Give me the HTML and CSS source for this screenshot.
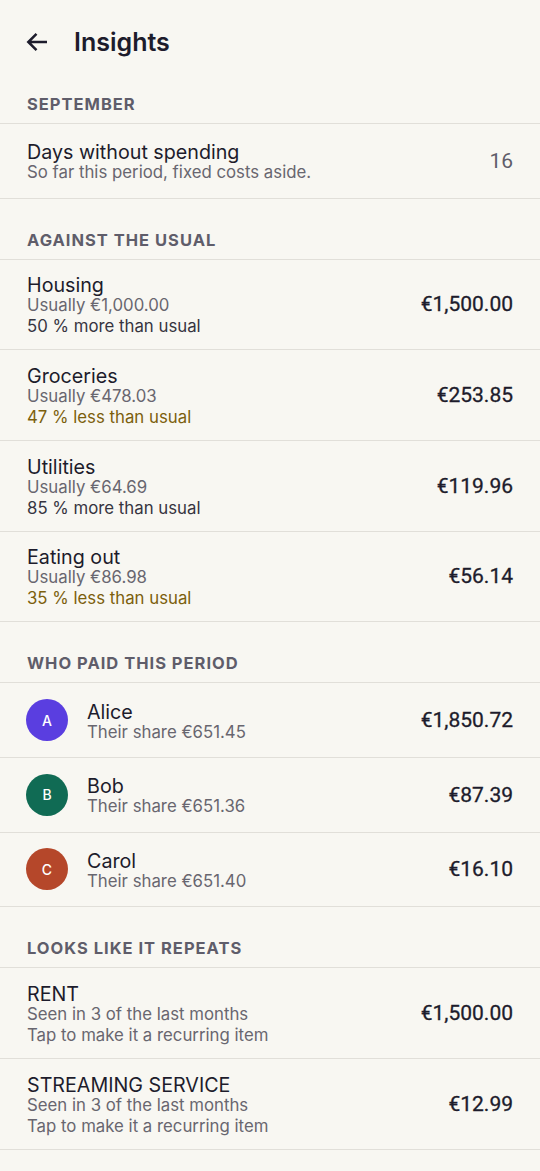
FILE: index.html
```html
<!doctype html>
<html lang="en">
  <head>
    <meta charset="utf-8">
    <meta name="viewport" content="width=device-width,initial-scale=1">
    <title>Insights</title>
    <link rel="stylesheet" href="styles.css">
  </head>

  <body>
    <header class="appbar">
      <svg class="back" viewBox="0 0 24 24" width="24" height="24">
        <path d="M23 12H4.5M12.5 3.8L4.3 12l8.2 8.2"/>
      </svg>
      <h1>Insights</h1>
    </header>

    <main>
      <section>
        <h2 class="first">September</h2>
        <ul>
          <li>
            <div class="text">
              <span class="title">Days without spending</span>
              <span class="sub">So far this period, fixed costs aside.</span>
            </div>
            <span class="count">16</span>
          </li>
        </ul>
      </section>

      <section>
        <h2>Against the usual</h2>
        <ul>
          <li>
            <div class="text">
              <span class="title">Housing</span>
              <span class="sub">Usually €1,000.00</span>
              <span class="note">50 % more than usual</span>
            </div>
            <span class="amount">€1,500.00</span>
          </li>
          <li>
            <div class="text">
              <span class="title">Groceries</span>
              <span class="sub">Usually €478.03</span>
              <span class="note less">47 % less than usual</span>
            </div>
            <span class="amount">€253.85</span>
          </li>
          <li>
            <div class="text">
              <span class="title">Utilities</span>
              <span class="sub">Usually €64.69</span>
              <span class="note">85 % more than usual</span>
            </div>
            <span class="amount">€119.96</span>
          </li>
          <li>
            <div class="text">
              <span class="title">Eating out</span>
              <span class="sub">Usually €86.98</span>
              <span class="note less">35 % less than usual</span>
            </div>
            <span class="amount">€56.14</span>
          </li>
        </ul>
      </section>

      <section>
        <h2>Who paid this period</h2>
        <ul>
          <li>
            <span class="avatar alice">A</span>
            <div class="text">
              <span class="title">Alice</span>
              <span class="sub">Their share €651.45</span>
            </div>
            <span class="amount">€1,850.72</span>
          </li>
          <li>
            <span class="avatar bob">B</span>
            <div class="text">
              <span class="title">Bob</span>
              <span class="sub">Their share €651.36</span>
            </div>
            <span class="amount">€87.39</span>
          </li>
          <li>
            <span class="avatar carol">C</span>
            <div class="text">
              <span class="title">Carol</span>
              <span class="sub">Their share €651.40</span>
            </div>
            <span class="amount">€16.10</span>
          </li>
        </ul>
      </section>

      <section>
        <h2>Looks like it repeats</h2>
        <ul>
          <li>
            <div class="text">
              <span class="title">RENT</span>
              <span class="sub">Seen in 3 of the last months</span>
              <span class="sub">Tap to make it a recurring item</span>
            </div>
            <span class="amount">€1,500.00</span>
          </li>
          <li>
            <div class="text">
              <span class="title">STREAMING SERVICE</span>
              <span class="sub">Seen in 3 of the last months</span>
              <span class="sub">Tap to make it a recurring item</span>
            </div>
            <span class="amount">€12.99</span>
          </li>
        </ul>
      </section>
    </main>
  </body>
</html>
```

FILE: styles.css
```css
body {
  margin: 0;
  background: #f8f7f2;
  color: #1d1c2c;
  font-family: "Inter", "Liberation Sans", sans-serif;
  -webkit-font-smoothing: antialiased;
}

.appbar {
  display: flex;
  align-items: center;
  height: 84px;
  padding: 0 24px;
  box-sizing: border-box;
}

.back {
  fill: none;
  stroke: #1d1c2c;
  stroke-width: 2.5;
  margin-right: 26px;
}

.appbar h1 {
  margin: 0;
  font-size: 25px;
  font-weight: 600;
  letter-spacing: 0;
}

h2 {
  margin: 0;
  padding: 31px 27px 9px;
  font-size: 16.5px;
  line-height: 20px;
  font-weight: 700;
  color: #5f5d6a;
  text-transform: uppercase;
  letter-spacing: 1px;
}

h2.first {
  padding-top: 10px;
}

ul {
  list-style: none;
  margin: 0;
  padding: 0;
  border-top: 1px solid #e1dfd9;
}

li {
  display: flex;
  align-items: center;
  min-height: 74.67px;
  padding: 11.83px 27px;
  box-sizing: border-box;
  border-bottom: 1px solid #e1dfd9;
}

.text {
  flex: 1;
  display: flex;
  flex-direction: column;
}

.title {
  font-size: 19.7px;
  line-height: 24px;
  padding-top: 2px;
  margin-bottom: -2px;
}

.sub, .note {
  font-size: 16.8px;
  line-height: 21px;
  color: #68666f;
}

.note {
  color: #36343f;
}

.note.less {
  color: #7c5f0d;
}

.amount {
  font-family: "Roboto", "Liberation Sans", sans-serif;
  font-size: 21px;
  font-weight: 400;
  color: #1d1c2c;
  -webkit-text-stroke: 0.3px #1d1c2c;
}

.count {
  font-family: "Roboto", "Liberation Sans", sans-serif;
  font-size: 21px;
  color: #5f5d6a;
}

.avatar {
  width: 42px;
  height: 42px;
  border-radius: 50%;
  margin: 0 19px 0 -1px;
  display: flex;
  align-items: center;
  justify-content: center;
  color: #fff;
  font-size: 14px;
  font-weight: 500;
}

.alice {
  background: #5a3ee0;
}

.bob {
  background: #106b54;
}

.carol {
  background: #b5472a;
}
```
